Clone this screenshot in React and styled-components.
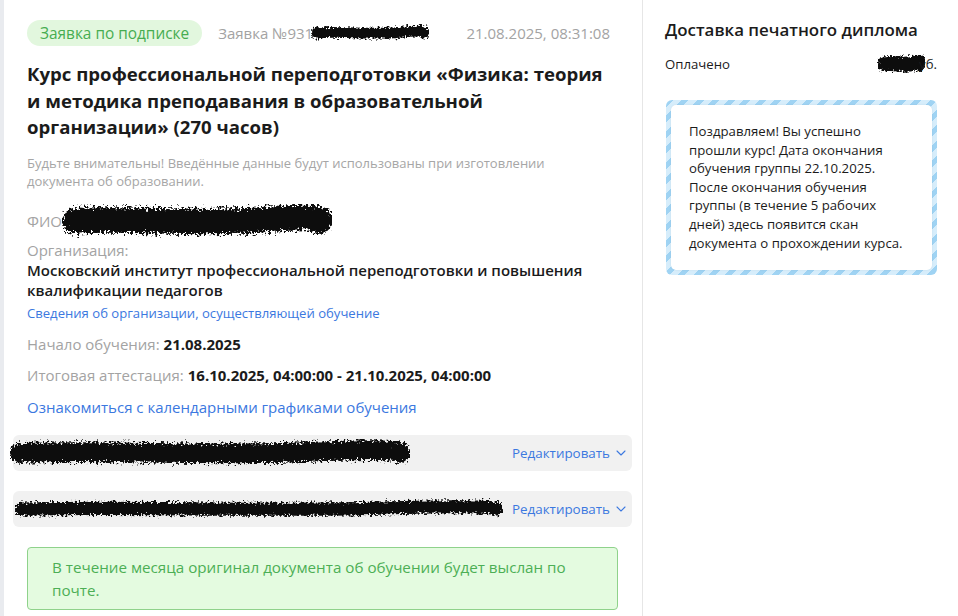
import React from "react";
import styled, { createGlobalStyle } from "styled-components";
import { ChevronDown } from "lucide-react";

const Global = createGlobalStyle`
  html, body { margin: 0; padding: 0; }
  body {
    background: #e9ebef;
    font-family: "Open Sans", "Noto Sans", sans-serif;
    color: #1f1f1f;
  }
`;

const Page = styled.div`
  display: flex;
  min-height: 616px;
  padding-left: 4px;
  box-sizing: border-box;
`;

const Main = styled.main`
  width: 639px;
  background: #fff;
  border-right: 1px solid #e6e6e6;
  padding: 20px 10px 0 23px;
  box-sizing: border-box;
`;

const Aside = styled.aside`
  flex: 1;
  background: #fff;
  padding: 18px 21px 0 22px;
  box-sizing: border-box;
`;

const Header = styled.div`
  display: flex;
  align-items: center;
  height: 26px;
  margin-right: 22px;
`;

const Badge = styled.span`
  display: inline-flex;
  align-items: center;
  height: 26px;
  padding: 0 13px 0 13px;
  border-radius: 13px;
  background: #e2f7de;
  color: #47ad51;
  font-size: 15.4px;
  font-weight: 500;
`;

const Muted = styled.span`
  color: #a3a3a3;
  font-size: 15px;
  margin-left: ${(p) => p.$ml || 0}px;
`;

const DateText = styled(Muted)`
  margin-left: auto;
`;

const Title = styled.h1`
  margin: 15px 0 0;
  max-width: 590px;
  font-size: 18.6px;
  line-height: 26.5px;
  font-weight: 700;
  color: #1b1b1b;
`;

const Note = styled.p`
  margin: 13px 0 0;
  font-size: 13px;
  line-height: 18px;
  color: #a6a6a6;
  max-width: 560px;
`;

const Field = styled.div`
  display: flex;
  align-items: center;
  margin-top: ${(p) => p.$mt || 12}px;
  font-size: 15px;
  line-height: 20px;
  color: #a3a3a3;
  height: ${(p) => (p.$h ? p.$h + "px" : "auto")};
`;

const Label = styled.div`
  margin-top: ${(p) => p.$mt || 12}px;
  font-size: 15px;
  line-height: 20px;
  color: #a3a3a3;
`;

const Strong = styled.b`
  color: #1b1b1b;
  font-weight: 700;
  margin-left: 4px;
`;

const OrgName = styled.div`
  font-size: 15px;
  line-height: 20px;
  font-weight: 600;
  color: #1b1b1b;
`;

const Link = styled.a`
  display: block;
  color: #3b78e0;
  font-size: ${(p) => p.$size || 15}px;
  line-height: ${(p) => p.$lh || 20}px;
  margin-top: ${(p) => p.$mt || 0}px;
  text-decoration: none;
  cursor: pointer;
`;

const EditRow = styled.div`
  display: flex;
  align-items: center;
  height: 36px;
  margin: ${(p) => p.$mt}px 0 0 -14px;
  padding: 0 3px 0 0;
  background: #f1f1f1;
  border-radius: 6px;
`;

const EditButton = styled.span`
  margin-left: auto;
  display: inline-flex;
  align-items: center;
  gap: 3px;
  color: #3b78e0;
  font-size: 13.4px;
`;

const Alert = styled.div`
  margin: 20px 14px 0 0;
  padding: 8px 24px 7px;
  background: #e4fbe0;
  border: 1px solid #8fd28b;
  border-radius: 4px;
  color: #4caf55;
  font-size: 15.2px;
  line-height: 23px;
`;

const AsideTitle = styled.h2`
  margin: 0;
  font-size: 16.9px;
  line-height: 24px;
  font-weight: 600;
  color: #1b1b1b;
`;

const PaidRow = styled.div`
  display: flex;
  align-items: center;
  justify-content: space-between;
  margin-top: 12px;
  font-size: 13.2px;
  line-height: 18px;
  color: #1b1b1b;
`;

const Amount = styled.span`
  display: inline-flex;
  align-items: center;
`;

const Striped = styled.div`
  margin-top: 26px;
  margin-left: 1px;
  padding: 5px;
  border-radius: 6px;
  background: repeating-linear-gradient(
    135deg,
    #9fd3f3 0 5px,
    #d6edfb 5px 11px
  );
`;

const StripedInner = styled.div`
  background: #fff;
  border-radius: 5px;
  padding: 17px 26px 18px 18px;
  font-size: 13.2px;
  line-height: 18.6px;
  color: #1b1b1b;
  box-shadow: 0 0 2px rgba(0, 0, 0, 0.08);
`;

const ScribbleSvg = styled.svg`
  display: block;
  flex: none;
  margin: ${(p) => p.$m || "0"};
`;

function Scribble({ id, w, h, seed = 1, m, thick = 0.6 }) {
  const y = h / 2;
  const r = (h * thick) / 2;
  const d = `M ${r} ${y} C ${w * 0.25} ${y - h * 0.12}, ${w * 0.5} ${y + h * 0.12}, ${w * 0.75} ${y - h * 0.04} S ${w - r} ${y}, ${w - r} ${y}`;
  return (
    <ScribbleSvg width={w} height={h} viewBox={`0 0 ${w} ${h}`} $m={m}>
      <defs>
        <filter id={id} filterUnits="userSpaceOnUse" x="0" y="0" width={w} height={h}>
          <feTurbulence type="fractalNoise" baseFrequency="0.45" numOctaves="3" seed={seed} result="n" />
          <feDisplacementMap in="SourceGraphic" in2="n" scale={h * 0.4} xChannelSelector="R" yChannelSelector="G" />
        </filter>
      </defs>
      <path
        d={d}
        stroke="#0a0a0a"
        strokeWidth={h * thick}
        strokeLinecap="round"
        fill="none"
        filter={`url(#${id})`}
      />
    </ScribbleSvg>
  );
}

export default function App() {
  return (
    <>
      <Global />
      <Page>
        <Main>
          <Header>
            <Badge>Заявка по подписке</Badge>
            <Muted $ml={16}>Заявка №931</Muted>
            <Scribble id="s1" w={118} h={18} seed={3} m="0 0 0 -2px" />
            <DateText>21.08.2025, 08:31:08</DateText>
          </Header>
          <Title>
            Курс профессиональной переподготовки «Физика: теория и методика преподавания в образовательной организации» (270 часов)
          </Title>
          <Note>
            Будьте внимательны! Введённые данные будут использованы при изготовлении документа об образовании.
          </Note>
          <Field $mt={21} $h={20}>
            ФИО
            <Scribble id="s2" w={270} h={34} seed={7} m="-7px 0 -7px 0" thick={0.75} />
          </Field>
          <Label $mt={9}>Организация:</Label>
          <OrgName>
            Московский институт профессиональной переподготовки и повышения квалификации педагогов
          </OrgName>
          <Link $size={13.1} $lh={18} $mt={4}>
            Сведения об организации, осуществляющей обучение
          </Link>
          <Field>
            Начало обучения:<Strong>21.08.2025</Strong>
          </Field>
          <Field $mt={11}>
            Итоговая аттестация:<Strong>16.10.2025, 04:00:00 - 21.10.2025, 04:00:00</Strong>
          </Field>
          <Link $mt={12}>Ознакомиться с календарными графиками обучения</Link>
          <EditRow $mt={18}>
            <Scribble id="s3" w={400} h={28} seed={11} m="0 0 0 -3px" thick={0.7} />
            <EditButton>
              Редактировать <ChevronDown size={16} strokeWidth={1.6} />
            </EditButton>
          </EditRow>
          <EditRow $mt={20}>
            <Scribble id="s4" w={488} h={22} seed={5} m="0 0 0 2px" thick={0.6} />
            <EditButton>
              Редактировать <ChevronDown size={16} strokeWidth={1.6} />
            </EditButton>
          </EditRow>
          <Alert>В течение месяца оригинал документа об обучении будет выслан по почте.</Alert>
        </Main>
        <Aside>
          <AsideTitle>Доставка печатного диплома</AsideTitle>
          <PaidRow>
            <span>Оплачено</span>
            <Amount>
              <Scribble id="s5" w={48} h={20} seed={9} m="0 -6px 0 0" thick={0.75} />
              уб.
            </Amount>
          </PaidRow>
          <Striped>
            <StripedInner>
              Поздравляем! Вы успешно прошли курс! Дата окончания обучения группы 22.10.2025. После окончания обучения группы (в течение 5 рабочих дней) здесь появится скан документа о прохождении курса.
            </StripedInner>
          </Striped>
        </Aside>
      </Page>
    </>
  );
}
